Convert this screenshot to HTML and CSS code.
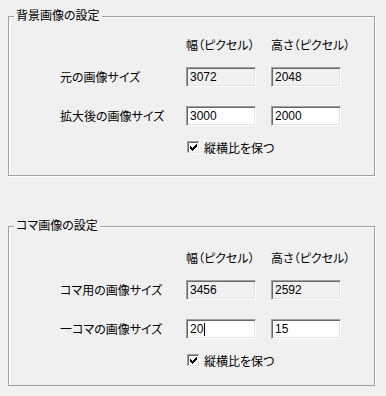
FILE: index.html
```html
<!DOCTYPE html>
<html lang="ja">
<head>
<meta charset="utf-8">
<link rel="stylesheet" href="styles.css">
</head>
<body>
<div class="page">
  <div class="group">
    <span class="title">背景画像の設定</span>
    <div class="row row-head">
      <span class="label"></span>
      <span class="head">幅（ピクセル）</span>
      <span class="head">高さ（ピクセル）</span>
    </div>
    <div class="row row-1">
      <span class="label">元の画像サイズ</span>
      <div class="edit readonly">3072</div>
      <div class="edit readonly">2048</div>
    </div>
    <div class="row row-2">
      <span class="label">拡大後の画像サイズ</span>
      <div class="edit">3000</div>
      <div class="edit">2000</div>
    </div>
    <div class="row row-check">
      <span class="label"></span>
      <span class="check"><svg width="13" height="13" viewBox="0 0 13 13" shape-rendering="crispEdges"><rect x="0" y="0" width="13" height="13" fill="#fff"/><rect x="0" y="0" width="12" height="1" fill="#a0a0a0"/><rect x="0" y="0" width="1" height="12" fill="#a0a0a0"/><rect x="1" y="1" width="10" height="1" fill="#696969"/><rect x="1" y="1" width="1" height="10" fill="#696969"/><rect x="0" y="12" width="13" height="1" fill="#fff"/><rect x="12" y="0" width="1" height="13" fill="#fff"/><rect x="1" y="11" width="11" height="1" fill="#e3e3e3"/><rect x="11" y="1" width="1" height="11" fill="#e3e3e3"/><g fill="#000"><rect x="3" y="5" width="1" height="3"/><rect x="4" y="6" width="1" height="3"/><rect x="5" y="7" width="1" height="3"/><rect x="6" y="6" width="1" height="3"/><rect x="7" y="5" width="1" height="3"/><rect x="8" y="4" width="1" height="3"/><rect x="9" y="3" width="1" height="3"/></g></svg></span>
      <span class="check-label">縦横比を保つ</span>
    </div>
  </div>
  <div class="group group-koma">
    <span class="title">コマ画像の設定</span>
    <div class="row row-head">
      <span class="label"></span>
      <span class="head">幅（ピクセル）</span>
      <span class="head">高さ（ピクセル）</span>
    </div>
    <div class="row row-1">
      <span class="label">コマ用の画像サイズ</span>
      <div class="edit readonly">3456</div>
      <div class="edit readonly">2592</div>
    </div>
    <div class="row row-2">
      <span class="label">一コマの画像サイズ</span>
      <div class="edit">20<span class="caret"></span></div>
      <div class="edit">15</div>
    </div>
    <div class="row row-check">
      <span class="label"></span>
      <span class="check"><svg width="13" height="13" viewBox="0 0 13 13" shape-rendering="crispEdges"><rect x="0" y="0" width="13" height="13" fill="#fff"/><rect x="0" y="0" width="12" height="1" fill="#a0a0a0"/><rect x="0" y="0" width="1" height="12" fill="#a0a0a0"/><rect x="1" y="1" width="10" height="1" fill="#696969"/><rect x="1" y="1" width="1" height="10" fill="#696969"/><rect x="0" y="12" width="13" height="1" fill="#fff"/><rect x="12" y="0" width="1" height="13" fill="#fff"/><rect x="1" y="11" width="11" height="1" fill="#e3e3e3"/><rect x="11" y="1" width="1" height="11" fill="#e3e3e3"/><g fill="#000"><rect x="3" y="5" width="1" height="3"/><rect x="4" y="6" width="1" height="3"/><rect x="5" y="7" width="1" height="3"/><rect x="6" y="6" width="1" height="3"/><rect x="7" y="5" width="1" height="3"/><rect x="8" y="4" width="1" height="3"/><rect x="9" y="3" width="1" height="3"/></g></svg></span>
      <span class="check-label">縦横比を保つ</span>
    </div>
  </div>
</div>
</body>
</html>
```
FILE: styles.css
```css
html, body {
  margin: 0;
  padding: 0;
  background: #f0f0f0;
}
body {
  font-family: "Noto Sans CJK JP", "Noto Sans", sans-serif;
  font-size: 12px;
  color: #000;
  font-feature-settings: "palt";
}
.page {
  padding-top: 16px;
  display: flex;
  flex-direction: column;
  gap: 50px;
}
.group {
  position: relative;
  margin-left: 8px;
  width: 367px;
  height: 160px;
  box-sizing: border-box;
  border: 1px solid #a0a0a0;
  box-shadow: 1px 1px 0 #fff, inset 1px 1px 0 #fff;
  padding-left: 51px;
}
.group-koma {
  padding-top: 3px;
}
.title {
  position: absolute;
  top: -10px;
  left: 5px;
  padding: 0 2px;
  line-height: 16px;
  background: #f0f0f0;
}
.row {
  display: flex;
  align-items: center;
  height: 20px;
}
.row-head { margin-top: 17px; }
.row-1 { margin-top: 13px; }
.row-2 { margin-top: 19px; }
.row-check { margin-top: 15px; height: 13px; }
.label {
  width: 126px;
  flex: none;
  line-height: 20px;
}
.head {
  width: 70px;
  flex: none;
  margin-right: 15px;
  white-space: nowrap;
}
.edit {
  width: 70px;
  height: 20px;
  flex: none;
  box-sizing: border-box;
  border: 1px solid;
  border-color: #a0a0a0 #fff #fff #a0a0a0;
  box-shadow: inset 1px 1px 0 #696969, inset -1px -1px 0 #e3e3e3;
  background: #fff;
  padding-left: 3px;
  margin-right: 15px;
  line-height: 18px;
  font-family: "Liberation Sans", sans-serif;
  font-size: 12px;
  display: flex;
  align-items: center;
}
.edit.readonly {
  background: #f0f0f0;
}
.caret {
  display: inline-block;
  width: 1px;
  height: 13px;
  background: #000;
  margin-left: 1px;
}
.check {
  display: block;
  width: 13px;
  height: 13px;
  margin-left: 1px;
}
.check svg {
  display: block;
}
.check-label {
  margin-left: 4px;
  line-height: 13px;
}
```
